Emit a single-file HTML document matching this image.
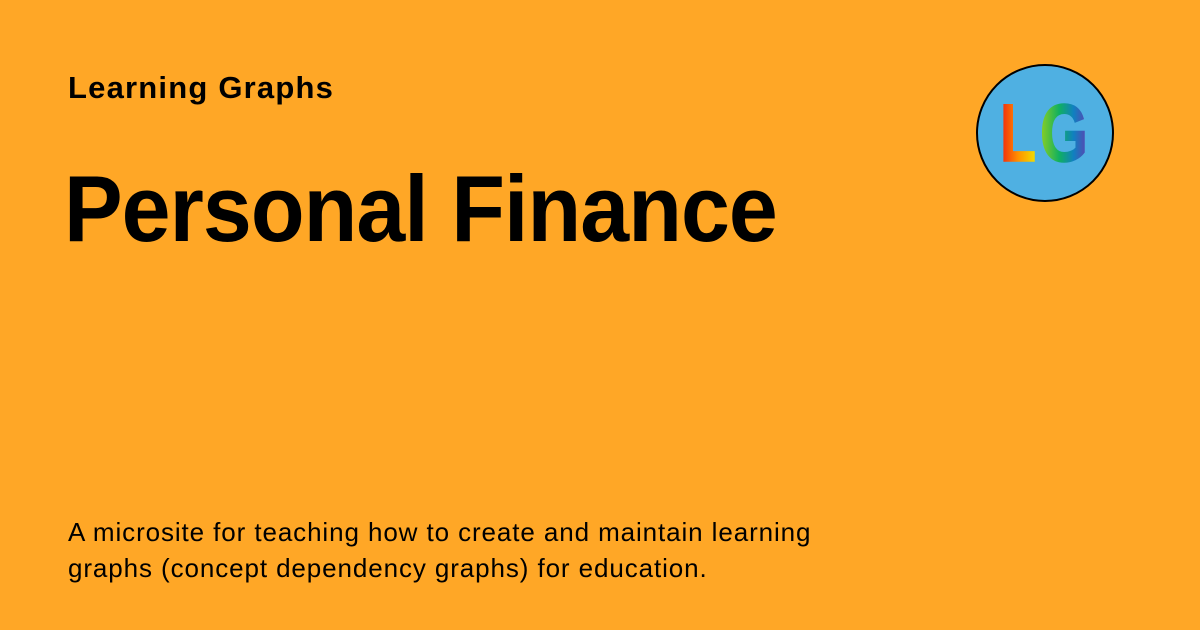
<!DOCTYPE html>
<html><head><style>
body{margin:0;width:1200px;height:630px;background:#FFA726;font-family:"Liberation Sans",sans-serif;position:relative;overflow:hidden;color:#000}
.a{position:absolute;left:68px;top:70px;font-size:31px;font-weight:bold;letter-spacing:1.2px}
.t{position:absolute;left:64px;top:155px;font-size:94px;font-weight:bold;letter-spacing:-1px;transform-origin:0 0;transform:scaleX(0.935);white-space:nowrap}
.d{position:absolute;left:68px;top:514px;font-size:26px;line-height:36px;width:900px;letter-spacing:0.9px}
.c{position:absolute;left:976px;top:64px;width:134px;height:134px;border:2px solid #000;border-radius:50%;background:#4FB0E2}
</style></head><body>
<div class="a">Learning Graphs</div>
<div class="t">Personal Finance</div>
<div class="d">A microsite for teaching how to create and maintain learning<br>graphs (concept dependency graphs) for education.</div>
<div class="c"></div>
<svg style="position:absolute;left:976px;top:64px" width="138" height="138">
<defs>
<linearGradient id="g1" x1="0" y1="0" x2="1" y2="0"><stop offset="0" stop-color="#f02010"/><stop offset="0.5" stop-color="#ff9000"/><stop offset="1" stop-color="#f0e000"/></linearGradient>
<linearGradient id="g2" x1="0" y1="0" x2="1" y2="0"><stop offset="0" stop-color="#90d020"/><stop offset="0.4" stop-color="#10b060"/><stop offset="0.7" stop-color="#1080c0"/><stop offset="1" stop-color="#6040b0"/></linearGradient>
</defs>
<text x="24" y="97" font-family="Liberation Sans" font-weight="bold" font-size="82" fill="url(#g1)" stroke="url(#g1)" stroke-width="1.5" textLength="36" lengthAdjust="spacingAndGlyphs">L</text>
<text x="64" y="97" font-family="Liberation Sans" font-weight="bold" font-size="82" fill="url(#g2)" stroke="url(#g2)" stroke-width="1.5" textLength="48" lengthAdjust="spacingAndGlyphs">G</text>
</svg>
</body></html>
